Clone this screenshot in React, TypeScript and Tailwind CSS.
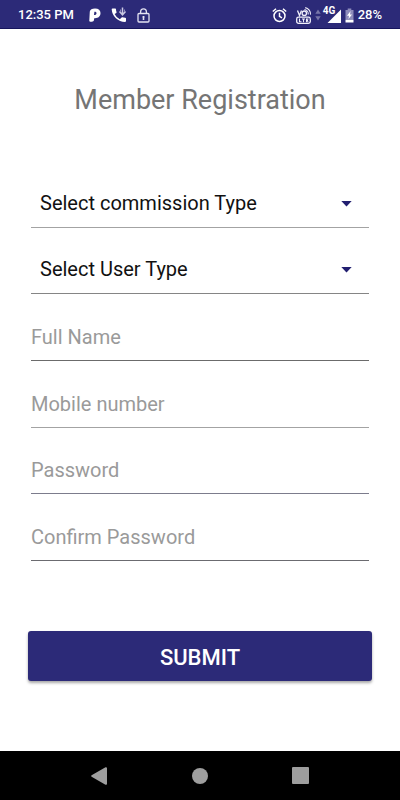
import React from "react";

const selects = [
  { id: "commission", label: "Select commission Type", options: ["Flat", "Percentage"], line: "border-[#a3a3a3]" },
  { id: "user", label: "Select User Type", options: ["Retailer", "Distributor"], line: "border-[#858585]" },
];

const inputs = [
  { id: "name", label: "Full Name", type: "text", line: "border-[#6b6b6b]" },
  { id: "mobile", label: "Mobile number", type: "tel", line: "border-[#a3a3a3]" },
  { id: "password", label: "Password", type: "password", line: "border-[#7c7c8c]" },
  { id: "confirm", label: "Confirm Password", type: "password", line: "border-[#6b6b70]" },
];

function StatusBar() {
  return (
    <header className="flex h-[29px] items-center justify-between border-b border-[#16145c] bg-[#2c2a78] px-[18px] pt-[2px] text-[13px] leading-4 font-medium text-white">
      <div className="flex items-center">
        <span>12:35 PM</span>
        <svg className="ml-[15px]" width="12" height="14" viewBox="0 0 12 14" aria-hidden="true">
          <path fillRule="evenodd" fill="#fff" d="M0.800 3.500 C1.200 1.500 3 0.400 6 0.400 C9.600 0.400 11.500 2.200 11.500 5 C11.500 8.200 9.400 10.200 6 10.200 H5.200 L5 12 C4.800 13.200 4 13.700 2.800 13.700 H1.200 C0.500 13.700 0.200 13.200 0.300 12.500 Z M5.400 3.800 L5 7 C6.600 7.100 7.500 6.400 7.500 5.200 C7.500 4.200 6.700 3.600 5.400 3.800 Z" />
        </svg>
        <svg className="ml-[10px]" width="16" height="16" viewBox="0 0 16 16" aria-hidden="true">
          <path fill="#fff" d="M3.600 7 a11.400 11.400 0 0 0 5.200 5.300 l1.800 -1.800 a.8 .8 0 0 1 .8 -.2 a9 9 0 0 0 2.800 .5 a.8 .8 0 0 1 .8 .8 v2.500 a.8 .8 0 0 1 -.8 .8 A13.400 13.400 0 0 1 .7 2.300 a.8 .8 0 0 1 .8 -.8 h2.700 a.8 .8 0 0 1 .8 .8 c0 1 .2 1.900 .5 2.800 a.8 .8 0 0 1 -.2 .8 Z" />
          <path stroke="#c9c8e2" strokeWidth="1.500" fill="none" d="M11.500 0.500 V7.500 M8.500 4.500 L11.500 7.800 L14.500 4.500" />
          <path stroke="#8d8bbb" strokeWidth="1" fill="none" d="M9.500 2.500 V5 M13.500 2.500 V5" />
        </svg>
        <svg className="ml-[10px]" width="13" height="15" viewBox="0 0 13 15" fill="none" stroke="#e4e3f2" strokeWidth="1.300" aria-hidden="true">
          <rect x="1" y="5.500" width="11" height="8.500" rx="1" />
          <path d="M3.600 5.500 V3.800 a2.900 2.900 0 0 1 5.800 0 V5.500" />
          <path strokeWidth="1.600" d="M6.500 8 v4 M5.500 9 h2" />
        </svg>
      </div>
      <div className="flex items-center">
        <svg width="15" height="15" viewBox="0 0 15 15" fill="none" stroke="#fff" strokeWidth="1.500" aria-hidden="true">
          <circle cx="7.500" cy="8" r="5.500" />
          <path d="M0.800 3.500 L4 0.800 M14.200 3.500 L11 0.800 M7.500 4.800 V8.300 L10 9.800" />
        </svg>
        <svg className="ml-[9px]" width="16" height="17" viewBox="0 0 16 17" fill="none" stroke="#f0effa" strokeWidth="1.300" aria-hidden="true">
          <path d="M1.500 3.500 L3.500 8.500 L5.500 3.500" />
          <circle cx="8.300" cy="6.200" r="2.200" />
          <path strokeWidth="1.100" d="M8.500 2.500 a4.500 4.500 0 0 1 3.700 5 M9.200 0.600 a6.500 6.500 0 0 1 5.300 7" />
          <rect x="0.700" y="10.200" width="13.600" height="6.100" rx="1.800" />
          <path strokeWidth="1.100" d="M3.500 11.500 v3.300 h2 M6 12 h3 M7.500 12 v3.300 M12.500 12 h-2 v2.800 h2 M10.500 13.400 h1.500" />
        </svg>
        <svg className="ml-[3px]" width="6" height="12" viewBox="0 0 6 12" fill="#7775a8" aria-hidden="true">
          <path d="M3 0.500 L5.700 4.800 H0.300 Z M3 11.500 L0.300 7.200 H5.700 Z" />
        </svg>
        <div className="relative ml-px h-[16px] w-[19px]">
          <span className="absolute top-[-2px] left-px text-[10px] leading-[12px] font-bold">4G</span>
          <svg className="absolute right-0 bottom-0" width="14" height="14" viewBox="0 0 14 14" fill="#fff" aria-hidden="true">
            <path d="M14 0.500 V14 H0.500 Z" />
          </svg>
        </div>
        <svg className="ml-[4px]" width="9" height="15" viewBox="0 0 9 15" aria-hidden="true">
          <path fill="#8d8bbb" d="M2.700 0.500 H6.300 V2 H8.500 V11 H0.500 V2 H2.700 Z" />
          <path fill="#fff" d="M0.500 11.500 H8.500 V14.500 H0.500 Z M5.600 3 L2 7.700 H4 L3.500 11 L7 6.500 H5 Z" />
        </svg>
        <span className="ml-[4px]">28%</span>
      </div>
    </header>
  );
}

function NavBar() {
  return (
    <nav className="flex h-[49px] items-center bg-black px-[49px]" aria-label="System">
      <div className="flex flex-1 justify-center">
        <button type="button" aria-label="Back">
          <svg width="18" height="20" viewBox="0 0 18 20" fill="#9e9e9e" aria-hidden="true">
            <path d="M16 1.200 a1 1 0 0 1 1 1 V17.800 a1 1 0 0 1 -1.500 .9 L1.600 10.800 a1 1 0 0 1 0 -1.600 L15.500 1.300 Z" />
          </svg>
        </button>
      </div>
      <div className="flex flex-1 justify-center">
        <button type="button" aria-label="Home" className="size-4 rounded-full bg-[#9e9e9e]" />
      </div>
      <div className="flex flex-1 justify-center">
        <button type="button" aria-label="Recent apps" className="size-[17px] rounded-[1px] bg-[#9e9e9e]" />
      </div>
    </nav>
  );
}

export default function App() {
  return (
    <div className="flex min-h-screen flex-col bg-white font-[Roboto,'Liberation_Sans',sans-serif]">
      <StatusBar />
      <main className="flex-1 px-7 pt-[53px] pb-[68px]">
        <h1 className="text-center text-[27px] leading-[36px] font-normal text-[#757575]">Member Registration</h1>
        <form className="pt-[43px]" onSubmit={(e) => e.preventDefault()}>
          <div className="mx-[3px] grid h-[400px] grid-rows-6">
            {selects.map((s) => (
              <div key={s.id} className={`flex items-end border-b ${s.line}`}>
                <div className="relative w-full">
                  <select
                    id={s.id}
                    aria-label={s.label}
                    defaultValue=""
                    className="h-12 w-full appearance-none bg-transparent pr-10 pl-[9px] text-[20px] leading-6 text-[#111111] outline-none"
                  >
                    <option value="">{s.label}</option>
                    {s.options.map((o) => (
                      <option key={o}>{o}</option>
                    ))}
                  </select>
                  <svg className="pointer-events-none absolute top-[22px] right-[17px]" width="11" height="6" viewBox="0 0 11 6" fill="#221f70" aria-hidden="true">
                    <path d="M0.300 0 H10.700 L5.500 5.600 Z" />
                  </svg>
                </div>
              </div>
            ))}
            {inputs.map((f) => (
              <div key={f.id} className={`flex items-end border-b ${f.line}`}>
                <input
                  id={f.id}
                  type={f.type}
                  aria-label={f.label}
                  placeholder={f.label}
                  className="h-[46px] w-full bg-transparent text-[20px] leading-6 text-[#111111] outline-none placeholder:text-[#9a9a9a]"
                />
              </div>
            ))}
          </div>
          <button
            type="submit"
            className="mt-[70px] h-[50px] w-full rounded-[3px] bg-[#2c2a78] pt-[3px] text-[22px] leading-7 font-medium text-white shadow-[0_2px_3px_rgba(0,0,0,0.35)]"
          >
            SUBMIT
          </button>
        </form>
      </main>
      <NavBar />
    </div>
  );
}
